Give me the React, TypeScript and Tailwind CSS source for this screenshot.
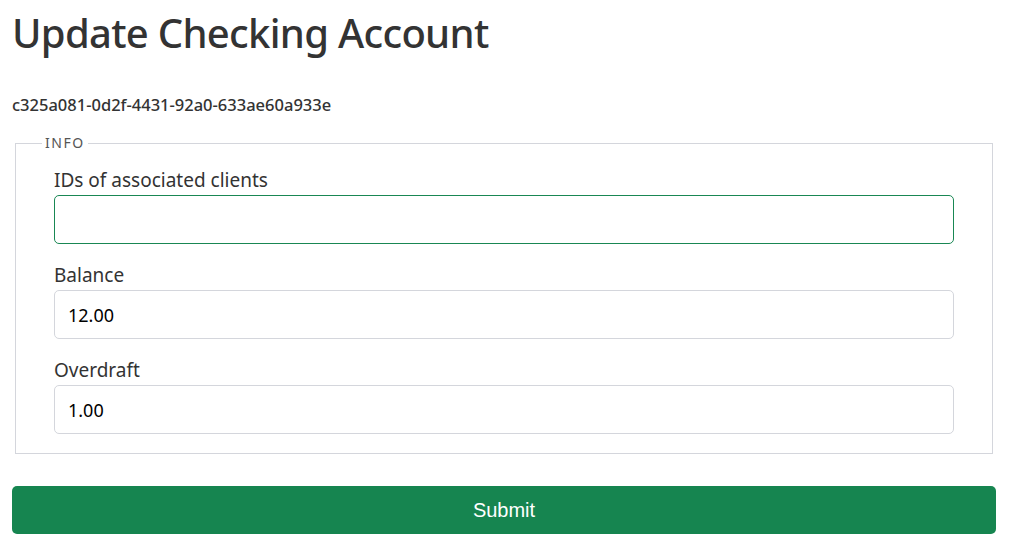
import { useState } from 'react'

const sans = { fontFamily: '"Noto Sans", "Open Sans", sans-serif' }

function Field({ label, value, focused }: { label: string; value: string; focused?: boolean }) {
  const [v, setV] = useState(value)
  return (
    <div className="flex flex-col">
      <label className="text-[19px] leading-[26px] text-[#333] mb-[2px]">{label}</label>
      <input
        type="text"
        value={v}
        onChange={e => setV(e.target.value)}
        className={
          focused
            ? 'w-[900px] h-[49px] px-[13px] rounded-[5px] border border-[#198754] text-[18px] text-black outline-none'
            : 'w-[900px] h-[49px] px-[13px] rounded-[5px] border border-[#d4d6dc] text-[18px] text-black outline-none'
        }
      />
    </div>
  )
}

export default function App() {
  return (
    <div className="bg-white min-h-[555px] pl-[12px] pt-[9px]" style={sans}>
      <h1 className="text-[40px] leading-[48px] font-medium tracking-[-0.7px] text-[#333]">Update Checking Account</h1>

      <p className="mt-[38px] text-[16.5px] leading-[20px] font-medium text-[#333]">c325a081-0d2f-4431-92a0-633ae60a933e</p>

      <fieldset className="mt-[19px] ml-[3px] w-[978px] border border-[#d4d6dc] pb-[19px]">
        <legend className="ml-[26px] px-[3px] text-[14px] leading-[18px] tracking-[1.5px] text-[#555]">INFO</legend>
        <div className="flex flex-col gap-[18px] mt-[15px] pl-[38px]">
          <Field label="IDs of associated clients" value="" focused />
          <Field label="Balance" value="12.00" />
          <Field label="Overdraft" value="1.00" />
        </div>
      </fieldset>

      <button
        className="mt-[32px] w-[984px] h-[48px] rounded-[5px] bg-[#168550] text-white text-[20px]"
        style={{ fontFamily: '"Liberation Sans", Arial, sans-serif' }}
      >
        Submit
      </button>
    </div>
  )
}
